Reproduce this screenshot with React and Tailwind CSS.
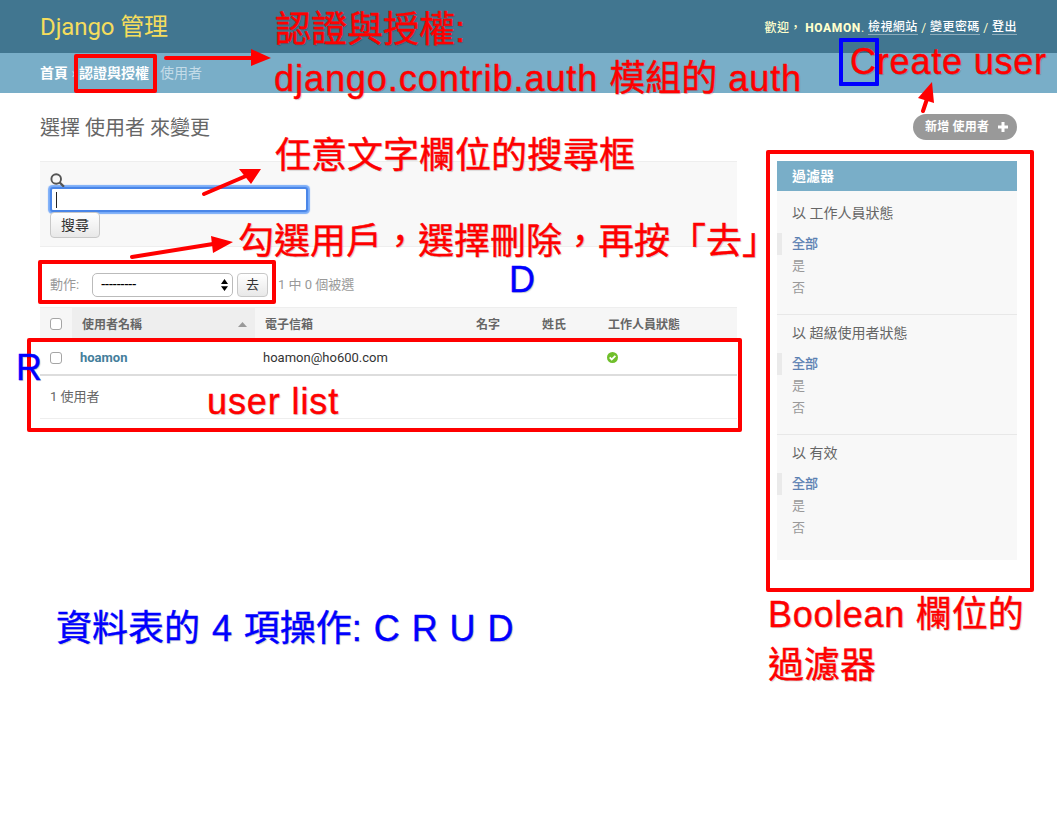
import React from "react";

const FILTERS = ["以 工作人員狀態", "以 超級使用者狀態", "以 有效"];

function Header() {
  return (
    <header className="flex h-[53px] items-center justify-between bg-[#417690] px-10">
      <h1 className="text-[24px] leading-none tracking-[-0.1px] text-[#f5dd5d]">Django 管理</h1>
      <div className="flex items-center whitespace-pre pt-[2px] text-[12px] leading-[14px] tracking-[0.45px] text-[#ffc]">
        <span className="font-medium">歡迎， </span>
        <strong className="font-extrabold tracking-[0.6px]">HOAMON</strong>
        <span>. </span>
        <a className="border-b border-white/40 font-medium text-white">檢視網站</a>
        <span> / </span>
        <a className="border-b border-white/40 font-medium text-white">變更密碼</a>
        <span> / </span>
        <a className="border-b border-white/40 font-medium text-white">登出</a>
      </div>
    </header>
  );
}

function Breadcrumbs() {
  return (
    <nav className="flex h-10 items-center whitespace-pre bg-[#79aec8] px-10 text-[14px] text-[#c4dce8]">
      <span className="w-[39px]"><a className="font-bold text-white">首頁</a> ›</span>
      <a className="w-[81px] font-bold text-white">認證與授權</a>
      <span>使用者</span>
    </nav>
  );
}

function SearchBar() {
  return (
    <div className="h-[86px] border-y border-[#eee] bg-[#f8f8f8] px-[10px] pt-[11px]">
      <svg className="block h-[14px] w-[15px]" viewBox="0 0 15 14" fill="none" stroke="#555">
        <circle cx="6.2" cy="6" r="4.8" strokeWidth="1.9" />
        <path d="M9.6 9.4L14 13.8" strokeWidth="2.2" />
      </svg>
      <div className="flex h-[25px] w-[258px] items-center rounded-[3px] border-2 border-[#4a86e8] bg-white pl-1 shadow-[0_0_1px_1.5px_#78abf8]">
        <i className="block h-4 w-px bg-[#222]" />
      </div>
      <button className="block h-[26px] w-[50px] rounded-[4px] border border-[#c8c8c8] bg-linear-to-b from-white to-[#e8e8e8] text-[14px] leading-[24px] text-[#333]">
        搜尋
      </button>
    </div>
  );
}

function Actions() {
  return (
    <div className="flex h-[60px] items-center px-[10px] pt-[16px] text-[13px] text-[#999]">
      <span className="w-[42px]">動作:</span>
      <div className="flex h-6 w-[141px] items-center justify-between rounded-[5px] border border-[#bbb] bg-white pl-2 pr-1 text-black">
        <span className="font-medium tracking-[-0.55px]">---------</span>
        <svg width="7" height="12" viewBox="0 0 7 12" fill="#000">
          <path d="M3.5 0L7 5H0zM3.5 12L0 7.2H7z" />
        </svg>
      </div>
      <button className="ml-1 h-6 w-[31px] rounded-[4px] border border-[#c8c8c8] bg-linear-to-b from-white to-[#e8e8e8] text-[13px] leading-[22px] text-[#333]">
        去
      </button>
      <span className="ml-[10px]">1 中 0 個被選</span>
    </div>
  );
}

function Check() {
  return <i className="block h-3 w-3 rounded-[3px] border border-[#a5a5a5] bg-white" />;
}

function Results() {
  return (
    <div>
      <div className="grid h-[32px] grid-cols-[32px_183px_212px_65px_66px_1fr] items-center border-t border-[#eee] bg-[#f6f6f6] text-[12px] font-bold text-[#666]">
        <div className="pl-[10px] pt-px"><Check /></div>
        <div className="flex h-[31px] items-center justify-between bg-[#eee] pl-[10px] pr-2 pt-[2px]">
          <span>使用者名稱</span>
          <svg width="9" height="5" viewBox="0 0 9 5" fill="#999"><path d="M4.5 0L9 5H0z" /></svg>
        </div>
        <span className="pl-[10px] pt-[2px]">電子信箱</span>
        <span className="pl-[9px] pt-[2px]">名字</span>
        <span className="pl-[10px] pt-[2px]">姓氏</span>
        <span className="pl-[10px] pt-[2px]">工作人員狀態</span>
      </div>
      <div className="grid h-[37px] grid-cols-[40px_183px_344px_1fr] items-center border-b-2 border-[#ddd] pt-[2px] text-[13px] text-[#333]">
        <div className="pl-[10px]"><Check /></div>
        <a className="font-bold text-[#447e9b]">hoamon</a>
        <span>hoamon@ho600.com</span>
        <svg width="11" height="11" viewBox="0 0 11 11">
          <circle cx="5.5" cy="5.5" r="5.5" fill="#70bf2b" />
          <path d="M2.7 5.4L4.7 7.4L8.4 3.8" fill="none" stroke="#fff" strokeWidth="1.8" />
        </svg>
      </div>
      <div className="flex h-[43px] items-center border-b border-[#eee] pl-[10px] text-[13px] text-[#666]">
        1 使用者
      </div>
    </div>
  );
}

function FilterPanel() {
  return (
    <aside className="h-[399px] w-60 bg-[#f8f8f8]">
      <h2 className="h-[30px] bg-[#79aec8] pl-[15px] text-[14px] font-bold leading-[30px] text-white">過濾器</h2>
      <div className="pt-1">
        {FILTERS.map((title) => (
          <section key={title} className="h-[120.2px] border-b border-[#e8e8e8] pt-2 last:border-b-0">
            <h3 className="h-[30px] pl-[15px] text-[14px] leading-5 text-[#666]">{title}</h3>
            <ul className="text-[13px] leading-[22px] text-[#999]">
              <li className="border-l-[5px] border-[#eaeaea] pl-[10px] text-[#5b80b2] [-webkit-text-stroke:0.3px_currentColor]">全部</li>
              <li className="pl-[15px]">是</li>
              <li className="pl-[15px]">否</li>
            </ul>
          </section>
        ))}
      </div>
    </aside>
  );
}

function Note({ className, children }) {
  return (
    <div className={"absolute whitespace-pre text-[36px] leading-[50px] " + className}>{children}</div>
  );
}

function Annotations() {
  return (
    <div className="pointer-events-none absolute inset-0 overflow-hidden font-['Liberation_Sans','Noto_Sans_CJK_TC',sans-serif] text-[#f00] [-webkit-text-stroke:0.4px_currentColor] [text-shadow:1px_1px_1px_rgba(0,0,0,0.2)]">
      <div className="absolute left-[74px] top-[54px] h-[39px] w-[83px] rounded-[2px] border-4 border-[#f00]" />
      <div className="absolute left-[38px] top-[260px] h-[44px] w-[238px] rounded-[2px] border-4 border-[#f00]" />
      <div className="absolute left-[27px] top-[338px] h-[94px] w-[715px] rounded-[2px] border-4 border-[#f00]" />
      <div className="absolute left-[766px] top-[150px] h-[442px] w-[268px] rounded-[2px] border-4 border-[#f00]" />
      <svg className="absolute left-0 top-0" width="1057" height="830" fill="#f00" stroke="#f00" strokeWidth="4" strokeLinecap="round">
        <path d="M166 58H252M204 194L246 176M132 257L213 244M923 111L927 99" />
        <path stroke="none" d="M251 49L271 58L251 66zM239 169L261 169L251 184zM211 236L233 242L213 253zM932 82L918 98L934 103z" />
      </svg>
      <Note className="left-[275px] top-[5px]">認證與授權:</Note>
      <Note className="left-[274px] top-[54px] tracking-[0.95px]">django.contrib.auth <span className="tracking-normal">模組的</span> auth</Note>
      <Note className="left-[275px] top-[131px]">任意文字欄位的搜尋框</Note>
      <Note className="left-[238px] top-[217px]">勾選用戶，選擇刪除，再按「去」</Note>
      <Note className="left-[850px] top-[37px] tracking-[0.8px]">Create user</Note>
      <Note className="left-[207px] top-[377px] tracking-[0.9px]">user list</Note>
      <Note className="left-[768px] top-[590px] tracking-[0.7px]">Boolean <span className="tracking-normal">欄位的</span></Note>
      <Note className="left-[768px] top-[641px]">過濾器</Note>
      <Note className="left-[509px] top-[255px] text-[#00f]">D</Note>
      <Note className="left-[16px] top-[343px] text-[#00f]">R</Note>
      <Note className="left-[56px] top-[604px] text-[#00f] [word-spacing:1.9px]">資料表的 4 項操作: C R U D</Note>
      <div className="absolute left-[839px] top-[38px] h-[48px] w-[40px] rounded-[1px] border-4 border-[#00f]" />
    </div>
  );
}

export default function App() {
  return (
    <div lang="zh-Hant" className="relative h-[830px] w-[1057px] overflow-hidden bg-white font-[Roboto,'Noto_Sans_CJK_TC',sans-serif]">
      <Header />
      <Breadcrumbs />
      <div className="flex h-[68px] items-center justify-between px-10">
        <h2 className="pt-px text-[20px] text-[#666]">選擇 使用者 來變更</h2>
        <a className="flex h-[26px] w-[104px] items-center justify-between rounded-full bg-[#999] pl-3 pr-[9px] text-[12px] font-bold tracking-[0.2px] text-white">
          新增 使用者
          <svg width="10" height="10" viewBox="0 0 10 10" stroke="#fff" strokeWidth="3"><path d="M5 0V10M0 5H10" /></svg>
        </a>
      </div>
      <div className="flex items-start gap-10 px-10">
        <main className="w-[697px]">
          <SearchBar />
          <Actions />
          <Results />
        </main>
        <FilterPanel />
      </div>
      <Annotations />
    </div>
  );
}
